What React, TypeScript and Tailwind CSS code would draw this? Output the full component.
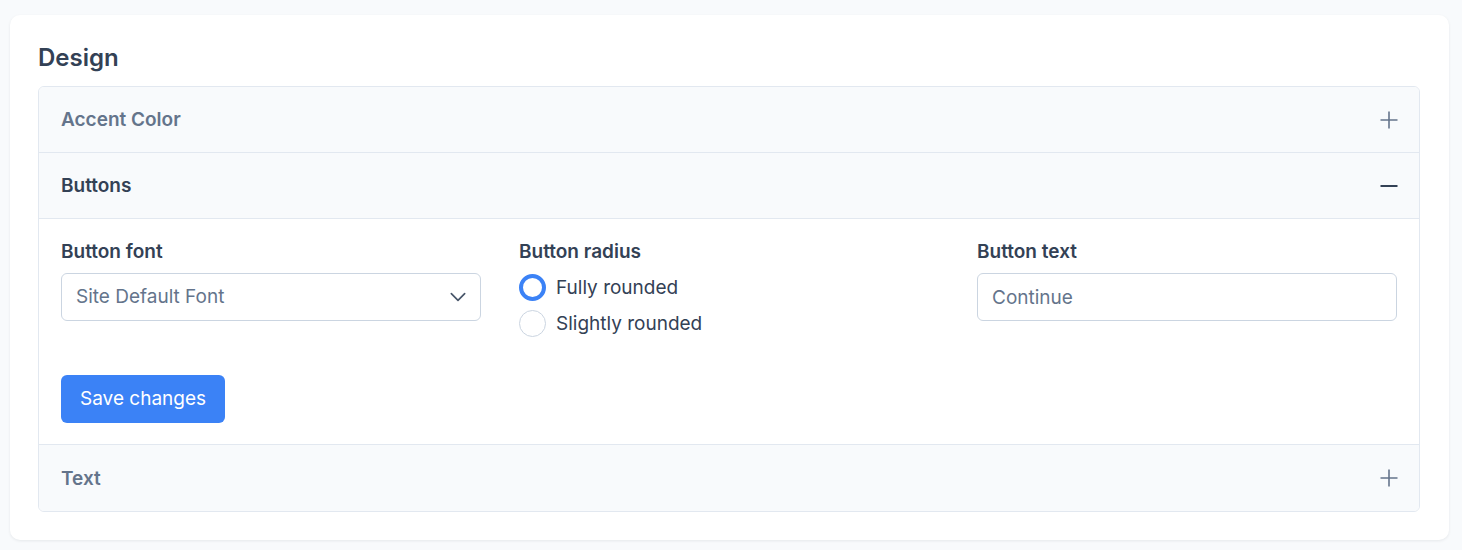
import { useState } from "react";

type Section = "accent" | "buttons" | "text";

function PlusIcon() {
  return (
    <svg width="20" height="20" viewBox="0 0 20 20" fill="none" stroke="currentColor" strokeWidth="1.6">
      <path d="M10 1.5v17M1.5 10h17" />
    </svg>
  );
}

function MinusIcon() {
  return (
    <svg width="20" height="20" viewBox="0 0 20 20" fill="none" stroke="currentColor" strokeWidth="2">
      <path d="M1.5 10h17" />
    </svg>
  );
}

function Header({ title, open, onClick, last }: { title: string; open: boolean; onClick: () => void; last?: boolean }) {
  return (
    <button
      onClick={onClick}
      className={
        "flex h-[66px] w-full items-center justify-between bg-[#f8fafc] pr-[20px] pl-[22px] text-left " +
        (last ? "" : "border-b border-[#e2e8f0]")
      }
    >
      <span className={"pt-[2px] text-[19px] font-semibold " + (open ? "text-[#334155]" : "text-[#64748b]")}>{title}</span>
      <span className={open ? "text-[#334155]" : "text-[#64748b]"}>{open ? <MinusIcon /> : <PlusIcon />}</span>
    </button>
  );
}

export default function App() {
  const [open, setOpen] = useState<Section | null>("buttons");
  const [radius, setRadius] = useState("full");

  const toggle = (s: Section) => setOpen(open === s ? null : s);

  return (
    <div className="min-h-[550px] w-full bg-[#f8fafc] pt-[15px] pr-[13px] pb-[11px] pl-[10px]" style={{ fontFamily: "Inter, 'Noto Sans', sans-serif" }}>
      <div className="rounded-[10px] bg-white pt-[28px] pr-[29px] pb-[28px] pl-[28px] shadow-[0_1px_3px_rgba(15,23,42,0.08)]">
        <h2 className="mb-[13px] text-[24px] leading-[30px] font-semibold text-[#334155]">Design</h2>
        <div className="overflow-hidden rounded-md border border-[#e2e8f0]">
          <Header title="Accent Color" open={open === "accent"} onClick={() => toggle("accent")} />
          <Header title="Buttons" open={open === "buttons"} onClick={() => toggle("buttons")} />
          {open === "buttons" && (
            <div className="border-b border-[#e2e8f0] bg-white px-[22px] pt-[20px] pb-[21px]">
              <div className="grid grid-cols-3 gap-x-[38px]">
                <div>
                  <label className="block text-[19px] leading-[26px] font-semibold text-[#334155]">Button font</label>
                  <div className="mt-[8px] flex h-[48px] items-center justify-between rounded-md border border-[#cbd5e1] pr-[12px] pl-[14px]">
                    <span className="text-[19px] text-[#64748b]">Site Default Font</span>
                    <svg width="20" height="20" viewBox="0 0 24 24" fill="none" stroke="#475569" strokeWidth="2" strokeLinecap="round" strokeLinejoin="round">
                      <path d="m4 8 8 8 8-8" />
                    </svg>
                  </div>
                </div>
                <div>
                  <label className="block text-[19px] leading-[26px] font-semibold text-[#334155]">Button radius</label>
                  <div className="mt-[9px] flex flex-col gap-[9px]">
                    {[
                      { id: "full", label: "Fully rounded" },
                      { id: "slight", label: "Slightly rounded" },
                    ].map((o) => (
                      <button key={o.id} onClick={() => setRadius(o.id)} className="flex h-[27px] items-center gap-[10px]">
                        <span
                          className={
                            "h-[27px] w-[27px] rounded-full " +
                            (radius === o.id ? "border-[4px] border-[#3b82f6]" : "border border-[#cbd5e1]")
                          }
                        />
                        <span className="text-[19px] leading-[27px] text-[#334155]">{o.label}</span>
                      </button>
                    ))}
                  </div>
                </div>
                <div>
                  <label className="block text-[19px] leading-[26px] font-semibold text-[#334155]">Button text</label>
                  <input
                    placeholder="Continue"
                    className="mt-[8px] h-[48px] w-full rounded-md border border-[#cbd5e1] px-[14px] text-[19px] text-[#334155] outline-none placeholder:text-[#64748b]"
                  />
                </div>
              </div>
              <button className="mt-[38px] h-[48px] rounded-md bg-[#3b82f6] px-[19px] text-[19px] text-white">Save changes</button>
            </div>
          )}
          <Header title="Text" open={open === "text"} onClick={() => toggle("text")} last />
        </div>
      </div>
    </div>
  );
}
